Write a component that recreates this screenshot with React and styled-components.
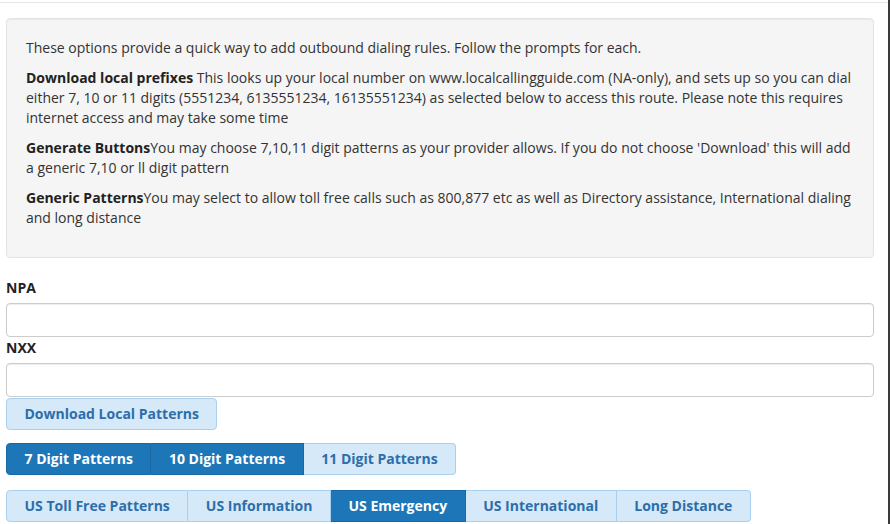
import React from 'react'
import styled, { createGlobalStyle } from 'styled-components'

const Global = createGlobalStyle`
  html, body {
    margin: 0;
    padding: 0;
    background: #fff;
  }
  body {
    font-family: 'Open Sans', 'Liberation Sans', sans-serif;
    font-size: 14px;
    line-height: 20px;
    color: #333;
  }
  * {
    box-sizing: border-box;
  }
`

const Page = styled.div`
  width: 890px;
  height: 524px;
  overflow: hidden;
  border-right: 2px solid #3a3a3a;
  padding-top: 2px;
`

const TopRule = styled.div`
  height: 1px;
  background: #e5e5e5;
`

const Content = styled.div`
  padding: 15px 14px 0 6px;
`

const Well = styled.div`
  background: #f5f5f5;
  border: 1px solid #e3e3e3;
  border-radius: 4px;
  box-shadow: inset 0 1px 1px rgba(0, 0, 0, 0.05);
  padding: 19px;
  margin-bottom: 20px;
  color: #333;

  p {
    margin: 0 0 10px;
  }
  b {
    font-weight: 700;
    color: #222;
  }
`

const Label = styled.label`
  display: block;
  font-weight: 700;
  color: #222;
  margin-bottom: 5px;
`

const Input = styled.input`
  display: block;
  width: 100%;
  height: 34px;
  border: 1px solid #ccc;
  border-radius: 4px;
  box-shadow: inset 0 1px 1px rgba(0, 0, 0, 0.075);
  background: #fff;
  padding: 6px 12px;
  font: inherit;
  margin: 0 0 1px;
`

const Btn = styled.button`
  height: 32px;
  padding: 0 17.5px;
  font-family: 'Open Sans', 'Liberation Sans', sans-serif;
  font-size: 14px;
  font-weight: 700;
  line-height: 20px;
  cursor: pointer;
  border: 1px solid ${p => (p.$active ? '#1868a3' : '#a9d0ee')};
  background: ${p => (p.$active ? '#1c76b8' : '#d6e9f8')};
  color: ${p => (p.$active ? '#fff' : '#2d6eaa')};
  border-radius: 4px;
`

const Group = styled.div`
  display: flex;
  margin-top: ${p => p.$top}px;

  ${Btn} {
    border-radius: 0;
  }
  ${Btn} + ${Btn} {
    border-left-width: 0;
  }
  ${Btn}:first-child {
    border-radius: 4px 0 0 4px;
  }
  ${Btn}:last-child {
    border-radius: 0 4px 4px 0;
  }
`

const digits = [
  { label: '7 Digit Patterns', active: true },
  { label: '10 Digit Patterns', active: true },
  { label: '11 Digit Patterns', active: false },
]

const generic = [
  { label: 'US Toll Free Patterns', active: false },
  { label: 'US Information', active: false },
  { label: 'US Emergency', active: true },
  { label: 'US International', active: false },
  { label: 'Long Distance', active: false },
]

export default function App() {
  return (
    <Page>
      <Global />
      <TopRule />
      <Content>
        <Well>
          <p>These options provide a quick way to add outbound dialing rules. Follow the prompts for each.</p>
          <p>
            <b>Download local prefixes</b> This looks up your local number on www.localcallingguide.com (NA-only), and
            sets up so you can dial either 7, 10 or 11 digits (5551234, 6135551234, 16135551234) as selected below to
            access this route. Please note this requires internet access and may take some time
          </p>
          <p>
            <b>Generate Buttons</b>You may choose 7,10,11 digit patterns as your provider allows. If you do not choose
            'Download' this will add a generic 7,10 or ll digit pattern
          </p>
          <p>
            <b>Generic Patterns</b>You may select to allow toll free calls such as 800,877 etc as well as Directory
            assistance, International dialing and long distance
          </p>
        </Well>

        <Label htmlFor="npa">NPA</Label>
        <Input id="npa" type="text" />
        <Label htmlFor="nxx">NXX</Label>
        <Input id="nxx" type="text" />
        <Btn type="button">Download Local Patterns</Btn>

        <Group $top={13}>
          {digits.map(d => (
            <Btn key={d.label} type="button" $active={d.active}>
              {d.label}
            </Btn>
          ))}
        </Group>
        <Group $top={15}>
          {generic.map(d => (
            <Btn key={d.label} type="button" $active={d.active}>
              {d.label}
            </Btn>
          ))}
        </Group>
      </Content>
    </Page>
  )
}
